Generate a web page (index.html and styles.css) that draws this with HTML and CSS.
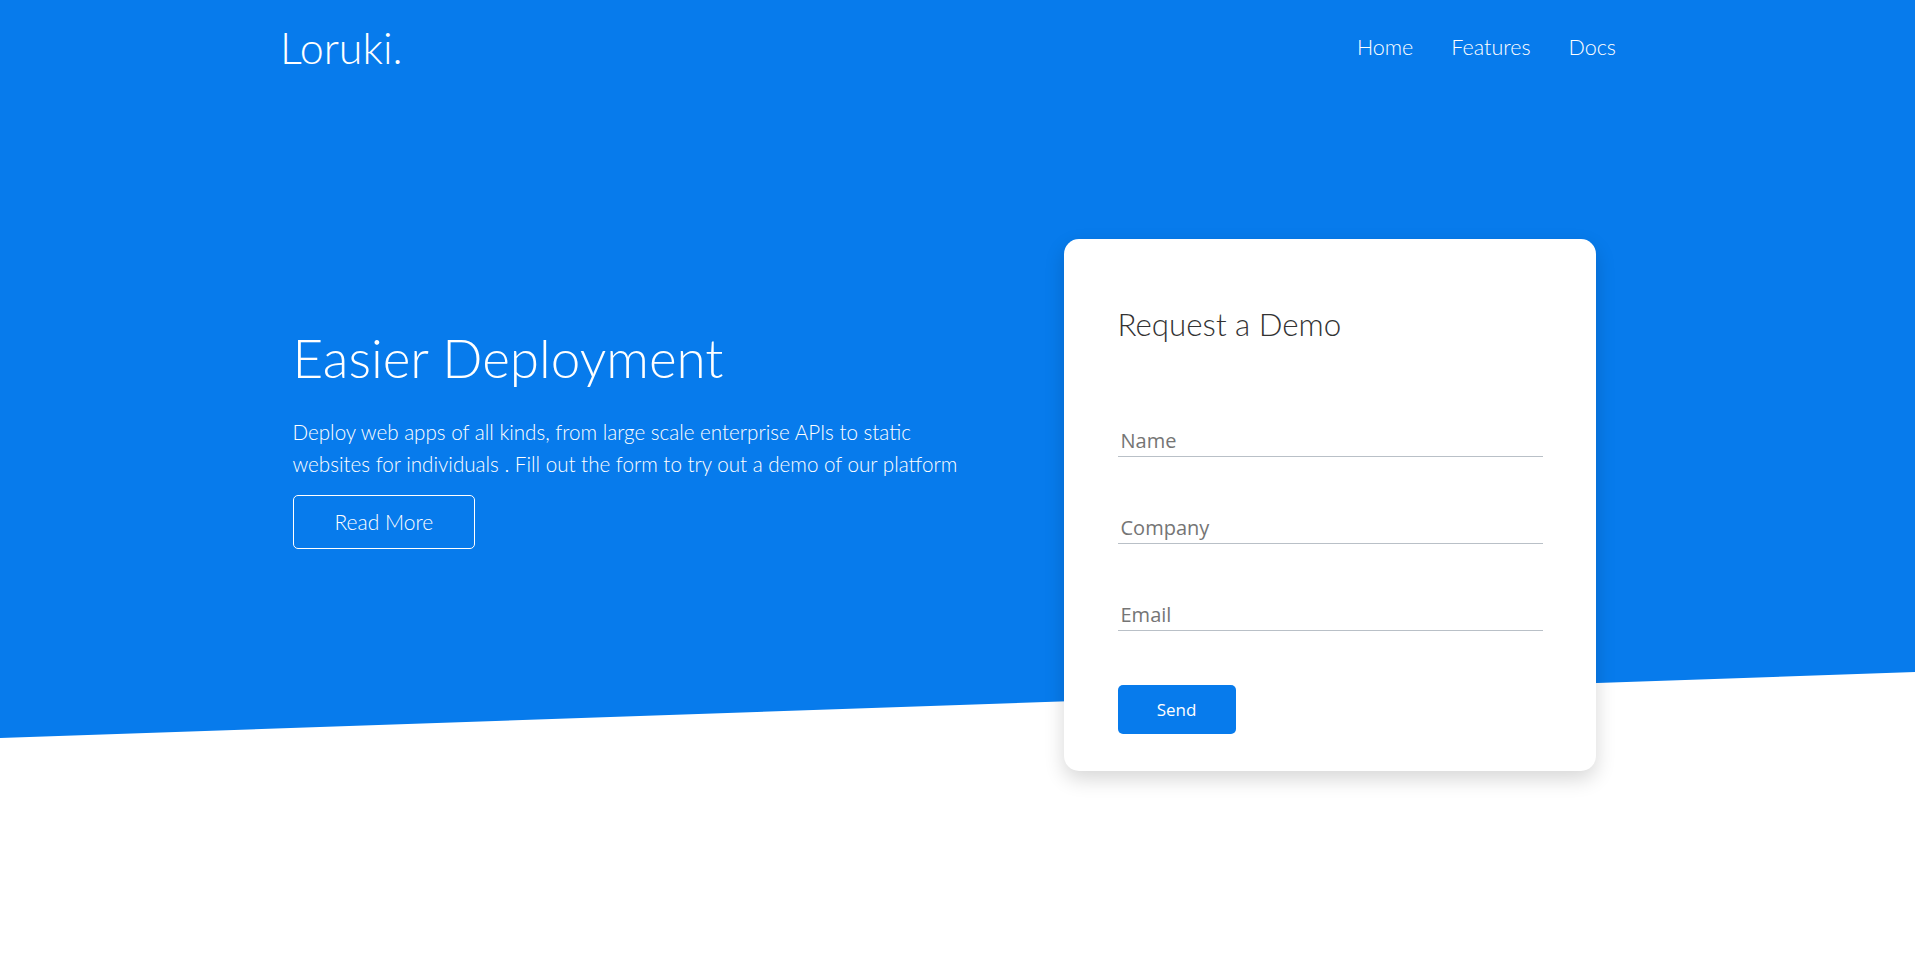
FILE: index.html
```html
<!DOCTYPE html>
<html lang="en">
<head>
<meta charset="utf-8">
<title>Loruki</title>
<link rel="stylesheet" href="styles.css">
</head>
<body>
<header class="hero">
  <nav class="navbar">
    <a class="logo" href="#">Loruki.</a>
    <ul class="nav-links">
      <li><a href="#">Home</a></li>
      <li><a href="#">Features</a></li>
      <li><a href="#">Docs</a></li>
    </ul>
  </nav>
  <div class="hero-body">
    <div class="hero-text">
      <h1>Easier Deployment</h1>
      <p>Deploy web apps of all kinds, from large scale enterprise APIs to static websites for individuals . Fill out the form to try out a demo of our platform</p>
      <a class="btn-outline" href="#">Read More</a>
    </div>
    <div class="card">
      <h2>Request a Demo</h2>
      <form class="demo-form">
        <input class="field" type="text" placeholder="Name">
        <input class="field" type="text" placeholder="Company">
        <input class="field" type="email" placeholder="Email">
        <button class="btn-send" type="button">Send</button>
      </form>
    </div>
  </div>
</header>
</body>
</html>
```
FILE: styles.css
```css
* { box-sizing: border-box; }
html, body { margin: 0; padding: 0; }
body {
  font-family: "Lato Light", Lato, "Open Sans", sans-serif;
  font-weight: 300;
  color: #333;
  background: #fff;
  min-height: 953px;
}
a { text-decoration: none; color: inherit; }

.hero {
  position: relative;
  color: #fff;
}
.hero::before {
  content: "";
  position: absolute;
  left: 0; top: 0; right: 0;
  height: 738px;
  background: #077bec;
  clip-path: polygon(0 0, 100% 0, 100% 672px, 0 738px);
  z-index: -1;
}

.navbar {
  width: 1355px;
  margin: 0 auto;
  height: 94px;
  display: flex;
  align-items: center;
  justify-content: space-between;
}
.logo {
  font-size: 43px;
  font-weight: 300;
  color: #fff;
}
.nav-links {
  list-style: none;
  display: flex;
  margin: 0;
  padding: 0;
}
.nav-links a {
  display: block;
  padding: 0 19px;
  font-size: 21.5px;
  font-weight: 300;
  color: #fff;
}

.hero-body {
  width: 1350px;
  margin: 0 auto;
  display: flex;
  justify-content: space-between;
  align-items: flex-start;
  padding: 0 37px 0 10px;
}
.hero-text {
  padding-top: 232px;
}
.hero-text h1 {
  margin: 0;
  font-size: 53px;
  font-weight: 300;
  line-height: 1.2;
}
.hero-text p {
  margin: 26px 0 15px;
  max-width: 690px;
  font-size: 20.6px;
  line-height: 32px;
}
.btn-outline {
  display: inline-block;
  padding: 14px 41px 14px;
  border: 1px solid #fff;
  border-radius: 5px;
  font-size: 21px;
  line-height: 24px;
  color: #fff;
}

.card {
  margin-top: 145px;
  width: 532px;
  background: #fff;
  border-radius: 15px;
  box-shadow: 0 8px 20px rgba(0, 0, 0, 0.16);
  padding: 67px 53px 37px 54px;
  color: #333;
}
.card h2 {
  margin: 0 0 83px;
  font-size: 31.3px;
  font-weight: 300;
  line-height: 1.2;
}
.demo-form {
  display: flex;
  flex-direction: column;
  align-items: flex-start;
}
.field {
  display: block;
  width: 100%;
  margin: 0 0 57px;
  padding: 0 3px 2px;
  border: 0;
  border-bottom: 1px solid #b9c0c7;
  outline: none;
  background: transparent;
  font-family: "Open Sans", sans-serif;
  font-size: 20px;
  color: #333;
}
.field:last-of-type { margin-bottom: 54px; }
.field::placeholder { color: #757575; }
.btn-send {
  width: 118px;
  height: 49px;
  border: 0;
  border-radius: 5px;
  background: #077bec;
  color: #fff;
  font-family: "Open Sans", sans-serif;
  font-size: 17px;
  cursor: pointer;
}
```
